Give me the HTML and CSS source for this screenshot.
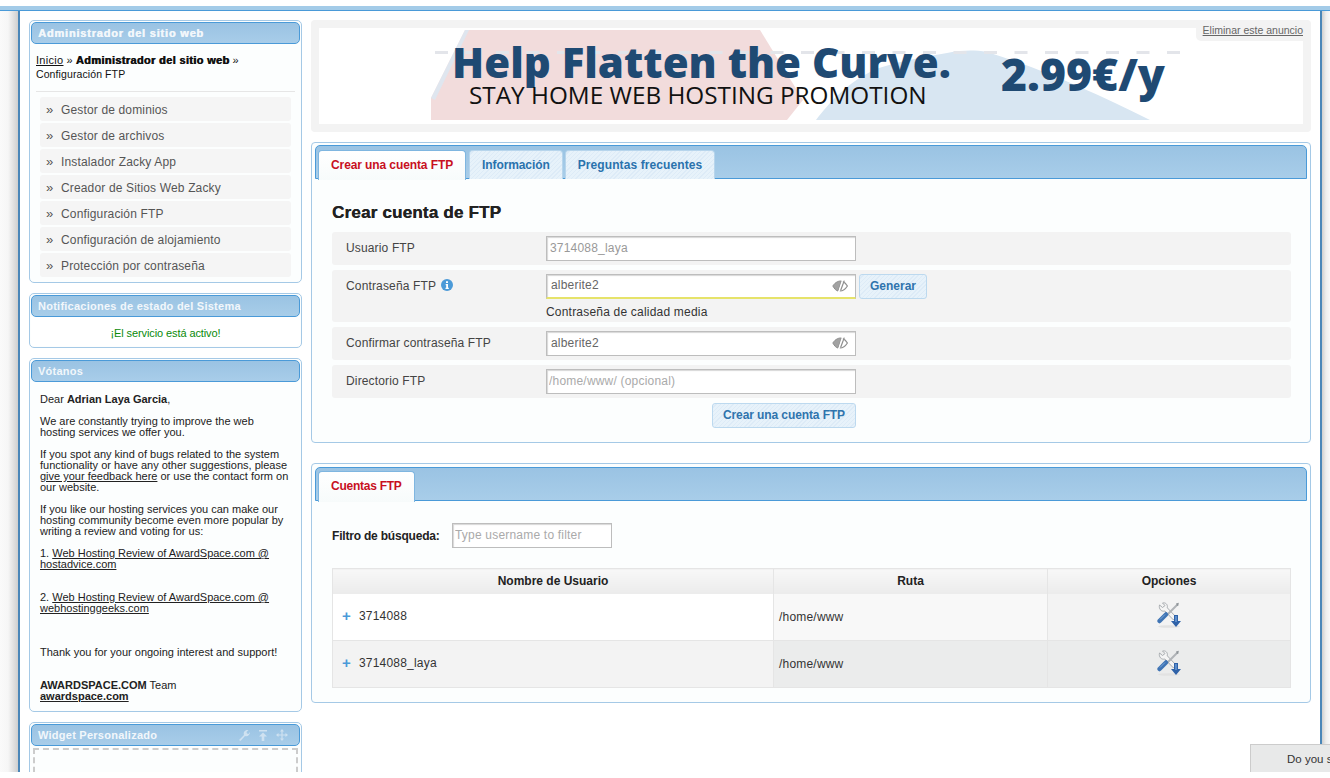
FILE: index.html
```html
<!DOCTYPE html>
<html lang="es">
<head>
    <meta charset="UTF-8">
    <meta name="viewport" content="width=device-width, initial-scale=1.0">
    <title>Configuración FTP</title>
    <link rel="stylesheet" href="styles.css">
</head>
<body>
    <svg class="defs" width="0" height="0">
        <symbol id="tools" viewBox="0 0 26 26">
            <ellipse cx="13" cy="24.500" rx="11" ry="1.300" fill="#e2e2e2"/>
            <path d="M3.500 3 L6.500 5.500 L9 3.500 L6.500 1 C9.500 .200 12 2.500 11.300 5.800 L20 15 L17.500 18 L8.800 9 C5.500 10 2.500 7 3.500 3 Z" fill="#f5f5f5" stroke="#a8acb0" stroke-width="1"/>
            <path d="M11 13 L21 3" stroke="#b0b4b8" stroke-width="2"/>
            <path d="M20 1.500 L22.800 .800 L22.300 3.800 L20.800 4 Z" fill="#8f9599"/>
            <path d="M3.500 19 L10 12.500" stroke="#3f74b4" stroke-width="4.500" stroke-linecap="round"/>
            <path d="M4 17.500 L9 12.500" stroke="#7ba7d8" stroke-width="1"/>
            <path d="M18 13 H22 V19 H25 L20 25 L15 19 H18 Z" fill="#2f62a8"/>
            <path d="M19 14 H21 V20 H19 Z" fill="#5a8ccb"/>
        </symbol>
        <symbol id="eye" viewBox="0 0 16 12">
            <path d="M.800 6 C3.500 1.800 7 .800 9.500 1 L6 11 C4 10.800 2.500 8.800 .800 6 Z" fill="#a2a2a2" stroke="#8e8e8e" stroke-width="1"/>
            <path d="M10.500 1.500 C12.500 2.300 14.300 4 15.400 6 C13.500 9 10.500 11.200 7.500 11" fill="none" stroke="#8e8e8e" stroke-width="1.200"/>
            <path d="M10.500 .300 L6.800 11.700" stroke="#fff" stroke-width="1.200"/>
            <path d="M12.300 .600 L8.600 10.500" stroke="#8e8e8e" stroke-width="1.200"/>
        </symbol>
    </svg>

    <div class="topbar"></div>
    <div class="shell">
        <div class="content">
            <aside class="sidebar">
                <div class="widget">
                    <h3 class="widget-head widget-head-main">Administrador del sitio web</h3>
                    <div class="crumbs">
                        <a href="#">Inicio</a> » <b class="heavy">Administrador del sitio web</b> »<br>
                        <span>Configuración FTP</span>
                    </div>
                    <ul class="nav">
                        <li>Gestor de dominios</li>
                        <li>Gestor de archivos</li>
                        <li>Instalador Zacky App</li>
                        <li>Creador de Sitios Web Zacky</li>
                        <li>Configuración FTP</li>
                        <li>Configuración de alojamiento</li>
                        <li>Protección por contraseña</li>
                    </ul>
                </div>

                <div class="widget">
                    <h3 class="widget-head">Notificaciones de estado del Sistema</h3>
                    <p class="status">¡El servicio está activo!</p>
                </div>

                <div class="widget">
                    <h3 class="widget-head">Vótanos</h3>
                    <div class="vote">
                        Dear <b>Adrian Laya Garcia</b>,<br><br>
                        We are constantly trying to improve the web<br>
                        hosting services we offer you.<br><br>
                        If you spot any kind of bugs related to the system<br>
                        functionality or have any other suggestions, please<br>
                        <a href="#">give your feedback here</a> or use the contact form on<br>
                        our website.<br><br>
                        If you like our hosting services you can make our<br>
                        hosting community become even more popular by<br>
                        writing a review and voting for us:<br><br>
                        1. <a href="#">Web Hosting Review of AwardSpace.com @<br>hostadvice.com</a><br><br><br>
                        2. <a href="#">Web Hosting Review of AwardSpace.com @<br>webhostinggeeks.com</a><br><br><br><br>
                        Thank you for your ongoing interest and support!<br><br><br>
                        <b>AWARDSPACE.COM</b> Team<br>
                        <a href="#"><b>awardspace.com</b></a>
                    </div>
                </div>

                <div class="widget widget-open">
                    <h3 class="widget-head widget-head-tools">
                        <span>Widget Personalizado</span>
                        <span class="head-icons">
                            <svg width="12" height="12" viewBox="0 0 12 12"><path d="M1 11 L6 6 C5 3 7 .500 10.500 1 L8.500 3 L9 4.500 L10.500 5 L12 3 C12 6 9.500 8 7 7 L2.500 12 Z" fill="#cfe2f1"/></svg>
                            <svg width="10" height="12" viewBox="0 0 10 12"><path d="M1 1 H9 V2.500 H1 Z M5 3.500 L9 7.500 H6.300 V12 H3.700 V7.500 H1 Z" fill="#cfe2f1"/></svg>
                            <svg width="12" height="12" viewBox="0 0 12 12"><path d="M6 0 L8 2.500 H6.600 V5.400 H9.500 V4 L12 6 L9.500 8 V6.600 H6.600 V9.500 H8 L6 12 L4 9.500 H5.400 V6.600 H2.500 V8 L0 6 L2.500 4 V5.400 H5.400 V2.500 H4 Z" fill="#cfe2f1"/></svg>
                        </span>
                    </h3>
                    <div class="drop-zone"></div>
                </div>
            </aside>

            <main class="main">
                <div class="ad">
                    <div class="ad-inner">
                        <svg class="banner" width="984" height="96" viewBox="0 0 984 96">
                            <path d="M112 92 V70 L146 2 H441 L484 72 L468 92 Z" fill="#f2dcdc"/>
                            <path d="M112 70 L146 2 L150 2 L116 72 Z" fill="#dfe6ef"/>
                            <path d="M497 92 C510 75 530 52 560 40 C585 32 610 28 628 25 C645 22 655 22 668 24 C720 40 770 62 831 92 Z" fill="#d8e6f2"/>
                            <path d="M116 24.500 H865" stroke="#e3e5ea" stroke-width="3" stroke-dasharray="13 17.500"/>
                            <text class="ad-title" x="133" y="50">Help Flatten the Curve.</text>
                            <text class="ad-sub" x="150" y="76">STAY HOME WEB HOSTING PROMOTION</text>
                            <text class="ad-price" x="682" y="63">2.99€/y</text>
                        </svg>
                        <a class="ad-remove" href="#">Eliminar este anuncio</a>
                    </div>
                </div>

                <section class="panel">
                    <div class="tabs">
                        <a class="tab tab-active" href="#">Crear una cuenta FTP</a>
                        <a class="tab" href="#">Información</a>
                        <a class="tab" href="#">Preguntas frecuentes</a>
                    </div>
                    <div class="panel-body">
                        <h2>Crear cuenta de FTP</h2>
                        <form>
                            <div class="row">
                                <label>Usuario FTP</label>
                                <div class="field"><input class="text-input input-muted" type="text" value="3714088_laya"></div>
                            </div>
                            <div class="row row-tall">
                                <label>Contraseña FTP
                                    <svg class="info" width="12" height="12" viewBox="0 0 12 12"><circle cx="6" cy="6" r="6" fill="#4b9ad8"/><path d="M5 2.300 H7 V4 H5 Z M4.700 5 H7 V8.800 H7.800 V10 H4.500 V8.800 H5.200 V6.200 H4.700 Z" fill="#fff"/></svg>
                                </label>
                                <div class="field">
                                    <div class="pass-line">
                                        <div class="pass-wrap">
                                            <input class="text-input input-pass input-medium" type="text" value="alberite2">
                                            <svg class="eye" width="16" height="12"><use href="#eye"/></svg>
                                        </div>
                                        <button class="btn" type="button">Generar</button>
                                    </div>
                                    <div class="hint">Contraseña de calidad media</div>
                                </div>
                            </div>
                            <div class="row">
                                <label>Confirmar contraseña FTP</label>
                                <div class="field">
                                    <div class="pass-wrap">
                                        <input class="text-input input-pass" type="text" value="alberite2">
                                        <svg class="eye" width="16" height="12"><use href="#eye"/></svg>
                                    </div>
                                </div>
                            </div>
                            <div class="row">
                                <label>Directorio FTP</label>
                                <div class="field"><input class="text-input" type="text" placeholder="/home/www/ (opcional)"></div>
                            </div>
                            <div class="submit-line">
                                <button class="btn btn-wide" type="button">Crear una cuenta FTP</button>
                            </div>
                        </form>
                    </div>
                </section>

                <section class="panel panel-accounts">
                    <div class="tabs">
                        <a class="tab tab-active tab-short" href="#">Cuentas FTP</a>
                    </div>
                    <div class="panel-body">
                        <div class="filter">
                            <label>Filtro de búsqueda:</label>
                            <input class="text-input filter-input" type="text" placeholder="Type username to filter">
                        </div>
                        <table class="accounts">
                            <thead>
                                <tr>
                                    <th class="col-user">Nombre de Usuario</th>
                                    <th class="col-path">Ruta</th>
                                    <th>Opciones</th>
                                </tr>
                            </thead>
                            <tbody>
                                <tr>
                                    <td><span class="plus">+</span>3714088</td>
                                    <td>/home/www</td>
                                    <td class="opts"><svg width="26" height="26"><use href="#tools"/></svg></td>
                                </tr>
                                <tr>
                                    <td><span class="plus">+</span>3714088_laya</td>
                                    <td>/home/www</td>
                                    <td class="opts"><svg width="26" height="26"><use href="#tools"/></svg></td>
                                </tr>
                            </tbody>
                        </table>
                    </div>
                </section>
            </main>
        </div>
        <div class="survey">Do you s</div>
    </div>
</body>
</html>
```

FILE: styles.css
```css
html, body {
    margin: 0;
    padding: 0;
    height: 778px;
    overflow: hidden;
    background-color: #fff;
}

body {
    font-family: "Liberation Sans", Arial, sans-serif;
    font-size: 12px;
    color: #222;
}

.defs {
    position: absolute;
}

.topbar {
    margin-top: 6px;
    height: 4px;
    background-color: #a3cbe8;
    border-bottom: 1px solid #4a9ad8;
}

.shell {
    position: relative;
    height: 761px;
    overflow: hidden;
    padding: 0 8px 0 18px;
    background: linear-gradient(to right, #fafafa 0, #f6f6f6 8px, #cfcfcf 18px, #cfcfcf 1322px, #eee 1326px, #f8f8f8 1330px);
}

.content {
    display: flex;
    gap: 9px;
    height: 752px;
    padding: 9px 9px 0;
    background-color: #fff;
    border-left: 2px solid #4a86b8;
    border-right: 2px solid #4a86b8;
}

/* sidebar */
.sidebar {
    flex: 0 0 273px;
    width: 273px;
}

.widget {
    margin-bottom: 10px;
    padding: 1px;
    background-color: #fcfefe;
    border: 1px solid #a5c9e6;
    border-radius: 5px;
}

.widget-head {
    margin: 0;
    height: 22px;
    padding-left: 6px;
    box-sizing: border-box;
    line-height: 20px;
    font-size: 11px;
    font-weight: bold;
    letter-spacing: 0.25px;
    color: #f2f7fb;
    background: linear-gradient(#9ac3e3, #a8cde9);
    border: 1px solid #4a9ad8;
    border-radius: 5px;
}

.widget-head-main {
    letter-spacing: 0.8px;
    text-shadow: 0.5px 0 0 currentColor;
}

.heavy {
    letter-spacing: 0.35px;
    text-shadow: 0.6px 0 0 currentColor;
}

.crumbs {
    padding: 9px 5px 10px;
    font-size: 11px;
    line-height: 14px;
    color: #111;
}

.crumbs span {
    font-size: 10.5px;
    letter-spacing: 0.1px;
}

.crumbs a {
    color: #111;
    letter-spacing: 0.3px;
}

.nav {
    list-style: none;
    margin: 0 5px 4px;
    padding: 5px 4px 0;
    border-top: 1px solid #e6e6e6;
}

.nav li {
    position: relative;
    height: 23px;
    margin-bottom: 2px;
    padding: 1px 0 0 21px;
    line-height: 24px;
    color: #555;
    letter-spacing: 0.15px;
    background-color: #f5f5f5;
    border-radius: 3px;
}

.nav li:last-child {
    margin-bottom: 0;
}

.nav li::before {
    content: "»";
    position: absolute;
    left: 6px;
    font-size: 13px;
}

.status {
    margin: 0;
    padding: 10px 0 6px;
    text-align: center;
    font-size: 11px;
    line-height: 13px;
    letter-spacing: -0.1px;
    color: #0a8a0a;
    background-color: #fff;
}

.vote {
    padding: 12px 9px 8px;
    font-size: 11px;
    line-height: 11px;
    color: #222;
    white-space: nowrap;
}

.vote a {
    color: #222;
}

.widget-head-tools {
    display: flex;
    justify-content: space-between;
    align-items: center;
    padding-right: 11px;
}

.head-icons {
    display: flex;
    gap: 8px;
    align-items: center;
}

.drop-zone {
    height: 60px;
    margin: 2px 2px 0;
    border: 2px dashed #ccc;
    border-bottom: 0;
}

/* main column */
.main {
    flex: 0 0 1000px;
    width: 1000px;
}

.ad {
    padding: 8px;
    margin-bottom: 10px;
    background-color: #f3f3f3;
    border-radius: 4px;
}

.ad-inner {
    position: relative;
    height: 96px;
    background-color: #fff;
}

.banner {
    display: block;
}

.ad-title {
    font-family: "Open Sans", sans-serif;
    font-weight: 800;
    font-size: 42px;
    fill: #1f4a73;
}

.ad-sub {
    font-family: "Open Sans", sans-serif;
    font-size: 24.3px;
    fill: #111;
}

.ad-price {
    font-family: "Open Sans", sans-serif;
    font-weight: 800;
    font-size: 44.5px;
    fill: #1f4a73;
}

.ad-remove {
    position: absolute;
    top: -4px;
    right: 0;
    height: 12px;
    padding: 0 0 5px 7px;
    font-size: 10.5px;
    line-height: 12px;
    color: #666;
    background-color: #f3f3f3;
    border-bottom-left-radius: 5px;
}

.panel {
    margin-bottom: 20px;
    padding: 2px 3px 0 3px;
    height: 297px;
    background-color: #fcfefe;
    border: 1px solid #a5c9e6;
    border-radius: 4px;
}

.panel-accounts {
    height: 235px;
    padding-top: 3px;
}

.tabs {
    display: flex;
    gap: 2px;
    height: 28px;
    padding: 4px 0 0 2px;
    background: linear-gradient(#9ac3e3, #a8cde9);
    border: 1px solid #4a9ad8;
    border-radius: 5px 5px 0 0;
}

.panel-accounts .tabs {
    height: 29px;
    padding-top: 3px;
}

.tab {
    display: block;
    height: 28px;
    padding: 0 12px;
    line-height: 28px;
    font-weight: bold;
    text-decoration: none;
    color: #2a72ad;
    background: repeating-linear-gradient(135deg, #e7f2fa 0, #e7f2fa 2px, #ddebf7 2px, #ddebf7 3px);
    border: 1px solid #b7d5ec;
    border-bottom: 0;
    border-radius: 4px 4px 0 0;
}

.tab + .tab {
    letter-spacing: -0.1px;
}

.tab + .tab + .tab {
    letter-spacing: 0.1px;
}

.tab-active {
    height: 29px;
    margin-right: 1px;
    letter-spacing: -0.1px;
    color: #c8101e;
    background: linear-gradient(#fff, #f7fbfb);
    border-color: #7fb6e0;
}

.tab-short {
    height: 30px;
    letter-spacing: -0.25px;
}

.panel-body {
    padding: 0 16px 0 17px;
}

h2 {
    margin: 0;
    padding: 24px 0 10px;
    font-size: 17px;
    line-height: 19px;
    letter-spacing: 0.2px;
    color: #222;
    text-shadow: 0.3px 0 0 currentColor;
}

.row {
    display: flex;
    min-height: 33px;
    margin-bottom: 5px;
    background-color: #f3f3f3;
    border-radius: 3px;
}

.row label {
    flex: 0 0 214px;
    padding: 9px 0 0 14px;
    box-sizing: border-box;
    line-height: 15px;
    color: #444;
    letter-spacing: 0.15px;
}

.field {
    padding-top: 4px;
}

.text-input {
    display: block;
    width: 310px;
    height: 25px;
    box-sizing: border-box;
    padding: 0 2px 2px;
    font-family: "Liberation Sans", Arial, sans-serif;
    font-size: 12px;
    letter-spacing: 0.2px;
    color: #666;
    background-color: #fff;
    border: 1px solid #bdbdbd;
    box-shadow: inset 1px 1px 1px #d8d8d8;
    outline: none;
}

.text-input::placeholder {
    color: #aaa;
}

.input-muted {
    padding-left: 3px;
    color: #999;
}

.input-pass {
    padding-left: 4px;
}

.input-medium {
    border-bottom: 2px solid #e6e36a;
}

.pass-line {
    display: flex;
    gap: 3px;
}

.pass-wrap {
    position: relative;
    width: 310px;
}

.eye {
    position: absolute;
    top: 6px;
    right: 8px;
}

.info {
    vertical-align: -1px;
    margin-left: 2px;
}

.hint {
    padding: 6px 0 2px;
    line-height: 15px;
    color: #333;
    letter-spacing: 0.2px;
}

.btn {
    display: block;
    height: 25px;
    width: 68px;
    padding: 0 0 1px;
    font-family: "Liberation Sans", Arial, sans-serif;
    font-size: 12px;
    font-weight: bold;
    color: #2f74ad;
    background: repeating-linear-gradient(135deg, #e7f2fa 0, #e7f2fa 2px, #ddebf7 2px, #ddebf7 3px);
    border: 1px solid #bcd9ef;
    border-radius: 3px;
}

.submit-line {
    display: flex;
    padding-left: 380px;
}

.btn-wide {
    width: 144px;
    letter-spacing: -0.1px;
}

.filter {
    display: flex;
    align-items: center;
    gap: 12px;
    padding-top: 22px;
    height: 25px;
    margin-bottom: 20px;
}

.filter label {
    flex: 0 0 108px;
    font-weight: bold;
    letter-spacing: -0.2px;
    white-space: nowrap;
}

.filter-input {
    width: 160px;
}

.accounts {
    width: 959px;
    table-layout: fixed;
    border-collapse: collapse;
}

.accounts th {
    height: 25px;
    padding: 0 0 1px;
    box-sizing: border-box;
    font-weight: bold;
    color: #222;
    background: linear-gradient(#f8f8f8, #ebebeb);
    border: 1px solid #e5e5e5;
    border-bottom: 0;
}

.col-user {
    width: 441px;
}

.col-path {
    width: 274px;
}

.accounts td {
    height: 47px;
    box-sizing: border-box;
    padding: 0 0 0 5px;
    color: #333;
    letter-spacing: 0.2px;
    border: 1px solid #e5e5e5;
    border-top: 0;
    border-right: 0;
}

.accounts td:first-child {
    padding: 0 0 2px 9px;
}

.accounts td.opts {
    padding: 0 0 3px;
}

.accounts td:last-child {
    border-right: 1px solid #e5e5e5;
}

.accounts tbody tr:first-child td:nth-child(1) {
    background-color: #fff;
}

.accounts tbody tr:first-child td:nth-child(2) {
    background-color: #f8f8f8;
}

.accounts tbody tr:first-child td:nth-child(3) {
    background-color: #f3f3f3;
}

.accounts tbody tr:last-child td:nth-child(1) {
    background-color: #f3f3f3;
}

.accounts tbody tr:last-child td:nth-child(2),
.accounts tbody tr:last-child td:nth-child(3) {
    background-color: #ebecec;
}

.plus {
    display: inline-block;
    width: 17px;
    line-height: 12px;
    vertical-align: -1px;
    font-size: 15px;
    font-weight: bold;
    color: #4b9ad8;
}

.opts {
    text-align: center;
}

.opts svg {
    display: block;
    margin: 0 auto;
}

.survey {
    position: absolute;
    right: 0;
    bottom: 0;
    width: 43px;
    height: 27px;
    padding-left: 36px;
    line-height: 29px;
    font-size: 11.5px;
    color: #333;
    white-space: nowrap;
    background-color: #e8e9e9;
    border-top: 1px solid #ccc;
    border-left: 1px solid #ccc;
}
```
